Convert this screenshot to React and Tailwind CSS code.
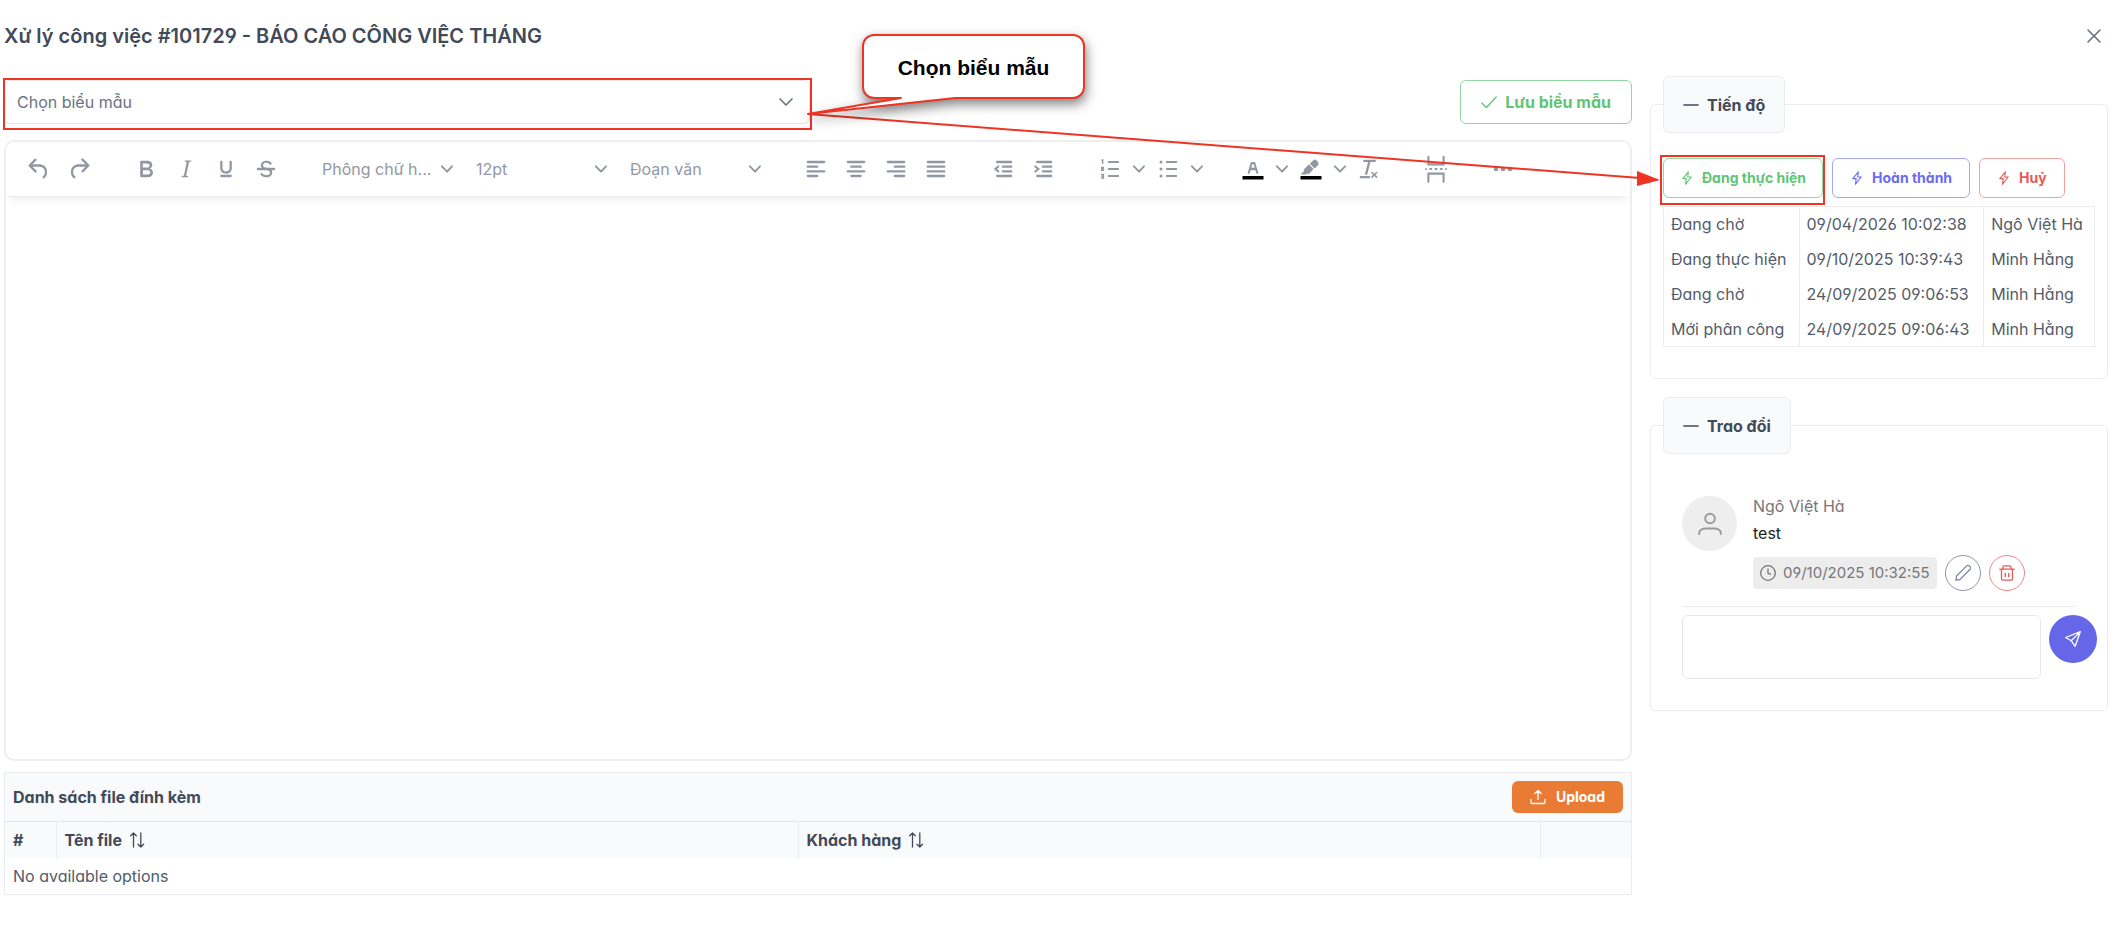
import { useState } from 'react';
import { ChevronDown, X } from 'lucide-react';

const history = [
    { status: 'Đang chờ', time: '09/04/2026 10:02:38', user: 'Ngô Việt Hà' },
    { status: 'Đang thực hiện', time: '09/10/2025 10:39:43', user: 'Minh Hằng' },
    { status: 'Đang chờ', time: '24/09/2025 09:06:53', user: 'Minh Hằng' },
    { status: 'Mới phân công', time: '24/09/2025 09:06:43', user: 'Minh Hằng' },
];

const Glyph = ({ children }) => (
    <svg viewBox="0 0 24 24" className="size-7" fill="currentColor" aria-hidden="true">
        {children}
    </svg>
);

const Lines = ({ rows }) => (
    <g stroke="currentColor" strokeWidth="2" strokeLinecap="round" fill="none">
        {rows.map(([x1, x2], i) => (
            <path key={i} d={`M${x1} ${6 + i * 4}H${x2}`} />
        ))}
    </g>
);

const icons = {
    undo: <path d="M6.4 8H12c3.7 0 6.2 2 6.8 5.1.6 2.7-.4 5.6-2.3 6.8a1 1 0 0 1-1-1.8c1.1-.6 1.8-2.7 1.4-4.6-.5-2.1-2.1-3.5-4.9-3.5H6.4l3.3 3.3a1 1 0 1 1-1.4 1.4l-5-5a1 1 0 0 1 0-1.4l5-5a1 1 0 0 1 1.4 1.4L6.4 8Z" />,
    redo: <path d="M17.6 10H12c-2.8 0-4.4 1.4-4.9 3.5-.4 2 .3 4 1.4 4.6a1 1 0 1 1-1 1.8c-2-1.2-2.9-4.1-2.3-6.8.6-3 3-5.1 6.8-5.1h5.6l-3.3-3.3a1 1 0 1 1 1.4-1.4l5 5a1 1 0 0 1 0 1.4l-5 5a1 1 0 0 1-1.4-1.4l3.3-3.3Z" />,
    bold: <path d="M7.8 19c-.3 0-.5 0-.6-.2l-.2-.5V5.7c0-.2 0-.4.2-.5l.6-.2h5c1.5 0 2.7.3 3.5 1 .7.6 1.1 1.4 1.1 2.5a3 3 0 0 1-.6 1.9c-.4.6-1 1-1.6 1.2.4.1.9.3 1.3.6s.8.7 1 1.2c.4.4.5 1 .5 1.6 0 1.3-.4 2.3-1.3 3-.8.7-2.1 1-3.8 1H7.8Zm5-8.3c.6 0 1.2-.1 1.6-.5.4-.3.6-.7.6-1.3 0-1.1-.8-1.7-2.3-1.7H9.3v3.5h3.4Zm.5 6c.7 0 1.3-.1 1.7-.4.4-.4.6-.9.6-1.5s-.2-1-.7-1.4c-.4-.3-1-.4-2-.4H9.4v3.8h4Z" />,
    italic: <path d="m16.7 4.7-.1.9h-.3c-.6 0-1 0-1.4.3-.3.3-.4.6-.5 1.1l-2.1 9.8v.6c0 .5.4.8 1.4.8h.2l-.2.8H8l.2-.8h.2c1.1 0 1.8-.5 2-1.5l2-9.8.1-.5c0-.6-.4-.8-1.4-.8h-.3l.2-.9h5.8Z" />,
    underline: <path d="M16 5c.6 0 1 .4 1 1v5.5a4 4 0 0 1-.4 1.8l-1 1.4a5.3 5.3 0 0 1-5.5 1 5 5 0 0 1-1.6-1c-.5-.4-.8-.9-1.1-1.4a4 4 0 0 1-.4-1.8V6c0-.6.4-1 1-1s1 .4 1 1v5.5c0 .3 0 .6.2 1l.6.7a3.3 3.3 0 0 0 2.2.8 3.4 3.4 0 0 0 2.2-.8c.3-.2.4-.5.6-.8l.2-.9V6c0-.6.4-1 1-1ZM8 17h8c.6 0 1 .4 1 1s-.4 1-1 1H8a1 1 0 0 1 0-2Z" />,
    strike: (
        <>
            <path d="M15.6 8.5c-.5-.7-1-1.1-1.3-1.3-.6-.4-1.3-.6-2-.6-2.7 0-2.8 1.7-2.8 2.1 0 1.6 1.8 2 3.2 2.3 4.4.9 4.6 2.8 4.6 3.9 0 1.4-.7 4.1-5 4.1A6.2 6.2 0 0 1 7 16.4l1.5-1.1c.4.6 1.6 2 3.7 2 1.6 0 2.5-.4 3-1.2.4-.8.3-2-.8-2.6-.7-.4-1.6-.7-2.9-1-1-.2-3.9-.8-3.9-3.6C7.6 6 10.3 5 12.4 5c2.9 0 4.2 1.6 4.7 2.4l-1.5 1.1Z" />
            <path d="M5 11h14a1 1 0 0 1 0 2H5a1 1 0 0 1 0-2Z" />
        </>
    ),
    left: <Lines rows={[[5, 19], [5, 13], [5, 19], [5, 13]]} />,
    center: <Lines rows={[[5, 19], [8, 16], [5, 19], [8, 16]]} />,
    right: <Lines rows={[[5, 19], [11, 19], [5, 19], [11, 19]]} />,
    justify: <Lines rows={[[5, 19], [5, 19], [5, 19], [5, 19]]} />,
    outdent: (
        <>
            <Lines rows={[[7, 19], [12, 19], [12, 19], [7, 19]]} />
            <path d="M8 9.8 5.4 12 8 14.2" fill="none" stroke="currentColor" strokeWidth="1.8" strokeLinecap="round" />
        </>
    ),
    indent: (
        <>
            <Lines rows={[[7, 19], [12, 19], [12, 19], [7, 19]]} />
            <path d="M5.4 9.8 8 12l-2.6 2.2" fill="none" stroke="currentColor" strokeWidth="1.8" strokeLinecap="round" />
        </>
    ),
    ordered: (
        <g fill="none" stroke="currentColor" strokeLinecap="round">
            <path d="M11 6h8M11 12h8M11 18h8" strokeWidth="1.8" />
            <path d="M4.8 4.5 5.8 4v3.2M4.8 10.7h1.6v1.2H4.8v1.3h1.7M4.8 16.7h1.6v3H4.8M5.1 18.2h1.3" strokeWidth="1.1" />
        </g>
    ),
    bullets: (
        <>
            <path d="M11 6h8M11 12h8M11 18h8" fill="none" stroke="currentColor" strokeWidth="1.8" strokeLinecap="round" />
            <circle cx="6" cy="6" r="1.3" />
            <circle cx="6" cy="12" r="1.3" />
            <circle cx="6" cy="18" r="1.3" />
        </>
    ),
    color: (
        <>
            <path d="M3 18h18v3H3z" fill="#000" />
            <path d="M8.7 16h-.8a.5.5 0 0 1-.5-.6l2.7-9c.1-.3.3-.4.5-.4h2.8c.2 0 .4.1.5.4l2.7 9a.5.5 0 0 1-.5.6h-.8a.5.5 0 0 1-.4-.4l-.7-2.2c0-.3-.3-.4-.5-.4h-3.4c-.2 0-.4.1-.5.4l-.7 2.2c0 .3-.2.4-.4.4Zm2.6-7.6-.6 2a.5.5 0 0 0 .5.6h1.6a.5.5 0 0 0 .5-.6l-.6-2c0-.3-.3-.4-.5-.4h-.4c-.2 0-.4.1-.5.4Z" />
        </>
    ),
    highlight: (
        <>
            <path d="M3 18h18v3H3z" fill="#000" />
            <path d="M7.7 16.7H3l3.3-3.3-.7-.8L10.2 8l4 4.1-4 4.2c-.2.2-.6.2-.8 0l-.6-.7-1.1 1.1Zm5-7.5L11 7.4l3-2.9a2 2 0 0 1 2.6 0L18 6c.7.7.7 2 0 2.7l-2.9 2.9-1.8-1.8-.6-.6Z" />
        </>
    ),
    clear: <path d="M13.2 6a1 1 0 0 1 0 .2l-2.6 10a1 1 0 0 1-1 .8h-.2a.8.8 0 0 1-.8-1l2.6-10H8a1 1 0 1 1 0-2h9a1 1 0 0 1 0 2h-3.8ZM5 18h7a1 1 0 0 1 0 2H5a1 1 0 0 1 0-2Zm13 1.5L16.5 18 15 19.5a.7.7 0 0 1-1-1l1.5-1.5-1.5-1.5a.7.7 0 0 1 1-1l1.5 1.5 1.5-1.5a.7.7 0 0 1 1 1L17.5 17l1.5 1.5a.7.7 0 0 1-1 1Z" />,
    pagebreak: (
        <g fill="none" stroke="currentColor" strokeLinecap="round">
            <path d="M5.500 1.500V8h13V1.500M5.500 23v-7h13v7" strokeWidth="1.8" />
            <path d="M3.500 12h.1M7 12h1M11.5 12h1M16 12h1M20.500 12h.1" strokeWidth="1.6" />
        </g>
    ),
    more: (
        <>
            <circle cx="6" cy="12" r="2" />
            <circle cx="12" cy="12" r="2" />
            <circle cx="18" cy="12" r="2" />
        </>
    ),
};

const Caret = () => (
    <svg viewBox="0 0 10 10" className="size-3 shrink-0" fill="currentColor" aria-hidden="true">
        <path d="M8.7 2.2c.3-.3.8-.3 1 0 .4.4.4.9 0 1.2L5.7 7.8c-.3.3-.9.3-1.2 0L.2 3.4a.8.8 0 0 1 0-1.2c.3-.3.8-.3 1.1 0L5 6l3.7-3.8Z" />
    </svg>
);

const Tool = ({ icon, label }) => (
    <button type="button" aria-label={label} className="flex h-10 w-10 items-center justify-center">
        <Glyph>{icons[icon]}</Glyph>
    </button>
);

const SplitTool = ({ icon, label }) => (
    <div className="flex">
        <Tool icon={icon} label={label} />
        <button type="button" aria-label={`${label} menu`} className="flex w-[18px] items-center justify-center">
            <Caret />
        </button>
    </div>
);

const MenuTool = ({ children }) => (
    <button type="button" className="flex h-10 w-[148px] items-center justify-between pr-2 pl-[9px] text-base">
        <span>{children}</span>
        <Caret />
    </button>
);

// 16px outline icons used on buttons
const Outline = ({ d, children }) => (
    <svg
        viewBox="0 0 16 16"
        className="size-4 shrink-0"
        fill="none"
        stroke="currentColor"
        strokeWidth="1.3"
        strokeLinecap="round"
        strokeLinejoin="round"
        aria-hidden="true"
    >
        {children}
        <path d={d} />
    </svg>
);

const Bolt = () => (
    <svg viewBox="0 0 14 14" className="size-3.5" fill="none" stroke="currentColor" strokeWidth="1.1" strokeLinejoin="round" aria-hidden="true">
        <path d="M8.4.8 2.8 7.6h3.4l-.7 5.6 5.7-7.2H7.7L8.4.8Z" />
    </svg>
);

const SortIcon = () => <Outline d="M4.500 15V1M1.700 3.800 4.500 1l2.800 2.800M11.800 1v14M9 12.200l2.800 2.800 2.800-2.800" />;

const Panel = ({ title, children }) => {
    const [open, setOpen] = useState(true);
    return (
        <fieldset className="min-w-0 rounded-md border border-[#ececee] px-3 pb-[31px]">
            <legend>
                <button
                    type="button"
                    onClick={() => setOpen(!open)}
                    className="flex h-[57px] items-center gap-2 rounded-md border border-[#ececee] bg-[#f9fafb] px-[19px] font-bold text-[#414a59]"
                >
                    <Outline d="M.8 8h14.400" />
                    {title}
                </button>
            </legend>
            {open && children}
        </fieldset>
    );
};

const Callout = () => (
    <>
        <svg className="pointer-events-none absolute top-0 left-0 h-[220px] w-[1680px] overflow-visible" fill="none" aria-hidden="true">
            <path d="M808 114 1640 178" stroke="#ee3423" strokeWidth="2" />
            <path d="m1660 180-23-9v15z" fill="#ee3423" />
            <path
                className="drop-shadow-[1px_5px_6px_rgba(0,0,0,0.5)]"
                d="M874 35h199a11 11 0 0 1 11 11v41a11 11 0 0 1-11 11H955L808 114l93-16h-27a11 11 0 0 1-11-11V46a11 11 0 0 1 11-11Z"
                fill="#fff"
                stroke="#ee3423"
                strokeWidth="2"
                strokeLinejoin="round"
            />
        </svg>
        <p className="absolute top-[36px] left-[862px] flex h-[63px] w-[223px] items-center justify-center font-['Liberation_Sans',sans-serif] text-[21px] font-bold text-black">
            Chọn biểu mẫu
        </p>
    </>
);

export default function App() {
    return (
        <div className="relative min-h-screen bg-white font-[Inter,sans-serif] text-base text-[#535c69] [font-feature-settings:'cv02','cv03','cv04','cv11']">
            <header className="flex h-[76px] items-center justify-between pr-[18px] pb-1 pl-1">
                <h1 className="text-xl font-semibold text-[#414a59]">
                    Xử lý công việc #101729 - BÁO CÁO CÔNG VIỆC THÁNG
                </h1>
                <button type="button" aria-label="Đóng" className="text-gray-500">
                    <X className="size-6" strokeWidth={1.6} />
                </button>
            </header>

            <main className="flex items-start gap-[18px] pr-4 pl-1">
                <section className="min-w-0 flex-1 pt-1">
                    {/* Form template */}
                    <div className="grid grid-cols-2 gap-4">
                        <div className="relative">
                            <select
                                aria-label="Chọn biểu mẫu"
                                className="h-11 w-full appearance-none rounded-md border border-[#e5e7eb] bg-white px-3 text-gray-500"
                            >
                                <option>Chọn biểu mẫu</option>
                            </select>
                            <ChevronDown className="pointer-events-none absolute top-2.5 right-3 size-6 text-gray-500" strokeWidth={1.7} />
                            <div className="pointer-events-none absolute -top-0.5 -right-0.5 -bottom-1.5 -left-px border-2 border-[#ee3423]" />
                        </div>
                        <button
                            type="button"
                            className="flex h-11 items-center gap-2 justify-self-end rounded-md border border-[#8fd8a0] px-5 font-bold text-[#5fc575]"
                        >
                            <Outline d="M.8 9l4.700 4.500L15.200 3" />
                            Lưu biểu mẫu
                        </button>
                    </div>

                    {/* Editor */}
                    <div className="mt-4 overflow-hidden rounded-[10px] border-2 border-[#eeeeee]">
                        <div className="relative flex h-[54px] items-center gap-[27px] bg-white pl-[13px] text-[#9298a3] shadow-[0_2px_2px_-2px_rgba(34,47,62,0.1),0_8px_8px_-4px_rgba(34,47,62,0.07)] [font-feature-settings:normal]">
                            <div className="flex">
                                <Tool icon="undo" label="Hoàn tác" />
                                <Tool icon="redo" label="Làm lại" />
                            </div>
                            <div className="flex">
                                <Tool icon="bold" label="Đậm" />
                                <Tool icon="italic" label="Nghiêng" />
                                <Tool icon="underline" label="Gạch dưới" />
                                <Tool icon="strike" label="Gạch ngang" />
                            </div>
                            <div className="flex gap-1.5">
                                <MenuTool>Phông chữ h...</MenuTool>
                                <MenuTool>12pt</MenuTool>
                                <MenuTool>Đoạn văn</MenuTool>
                            </div>
                            <div className="flex">
                                <Tool icon="left" label="Căn trái" />
                                <Tool icon="center" label="Căn giữa" />
                                <Tool icon="right" label="Căn phải" />
                                <Tool icon="justify" label="Căn đều" />
                            </div>
                            <div className="flex">
                                <Tool icon="outdent" label="Giảm thụt lề" />
                                <Tool icon="indent" label="Tăng thụt lề" />
                            </div>
                            <div className="flex">
                                <SplitTool icon="ordered" label="Danh sách số" />
                                <SplitTool icon="bullets" label="Danh sách" />
                            </div>
                            <div className="flex">
                                <SplitTool icon="color" label="Màu chữ" />
                                <SplitTool icon="highlight" label="Màu nền" />
                                <Tool icon="clear" label="Xóa định dạng" />
                            </div>
                            <Tool icon="pagebreak" label="Ngắt trang" />
                            <Tool icon="more" label="Thêm" />
                        </div>
                        <textarea aria-label="Nội dung" className="block h-[563px] w-full resize-none p-4 outline-none" />
                    </div>

                    {/* Attachments */}
                    <div className="mt-[11px] border border-[#ebebed]">
                        <div className="flex h-12 items-center justify-between bg-[#f9fafb] px-2">
                            <h2 className="font-bold text-[#414a59]">Danh sách file đính kèm</h2>
                            <button
                                type="button"
                                className="flex h-8 items-center gap-2.5 rounded-md bg-[#ea7b34] px-[18px] text-sm font-bold text-white"
                            >
                                <Outline d="M8 10.500V1.500M4.800 4.500 8 1.500l3.200 3M1 10.500v2.700c0 .8.5 1.300 1.300 1.300h11.400c.8 0 1.300-.5 1.300-1.300v-2.700" />
                                Upload
                            </button>
                        </div>
                        <table className="w-full table-fixed text-left">
                            <thead>
                                <tr className="h-9 border-t border-[#e3e5e8] bg-[#f9fafb] text-[#414a59]">
                                    <th className="w-[51px] border-r border-[#ebebed] px-2 font-bold">#</th>
                                    <th className="border-r border-[#ebebed] px-2 font-bold">
                                        <span className="flex items-center gap-[7px]">Tên file <SortIcon /></span>
                                    </th>
                                    <th className="border-r border-[#ebebed] px-2 font-bold">
                                        <span className="flex items-center gap-[7px]">Khách hàng <SortIcon /></span>
                                    </th>
                                    <td className="w-[91px]" />
                                </tr>
                            </thead>
                            <tbody>
                                <tr className="h-9">
                                    <td colSpan={4} className="px-2">No available options</td>
                                </tr>
                            </tbody>
                        </table>
                    </div>
                </section>

                <aside className="flex w-[458px] shrink-0 flex-col gap-[18px]">
                    <Panel title="Tiến độ">
                        <div className="flex gap-[9px] pt-[25px] text-sm font-bold">
                            <div className="relative">
                                <button type="button" className="flex h-10 items-center gap-2 rounded-md border border-[#8fd8a0] px-4 text-[#5fc575]">
                                    <Bolt /> Đang thực hiện
                                </button>
                                <div className="pointer-events-none absolute -top-[3px] -right-0.5 -bottom-[7px] -left-[3px] border-2 border-[#ee3423]" />
                            </div>
                            <button type="button" className="flex h-10 items-center gap-2 rounded-md border border-[#a5a7f3] px-[17px] text-[#6a6bee]">
                                <Bolt /> Hoàn thành
                            </button>
                            <button type="button" className="flex h-10 items-center gap-2 rounded-md border border-[#f0a09d] px-[17px] text-[#e45a55]">
                                <Bolt /> Huỷ
                            </button>
                        </div>
                        <table className="mt-2 w-full border border-[#ececee]">
                            <tbody>
                                {history.map((row) => (
                                    <tr key={row.time} className="h-[35px]">
                                        <td className="border-r border-[#ececee] px-[7px] whitespace-nowrap">{row.status}</td>
                                        <td className="border-r border-[#ececee] px-[7px] whitespace-nowrap">{row.time}</td>
                                        <td className="px-[7px] whitespace-nowrap">{row.user}</td>
                                    </tr>
                                ))}
                            </tbody>
                        </table>
                    </Panel>

                    <Panel title="Trao đổi">
                        <div className="mr-5 ml-[19px] flex gap-4 border-b border-[#ececee] pt-10 pb-[15px]">
                            <div className="mt-0.5 flex size-[55px] shrink-0 items-center justify-center rounded-full bg-[#eeeeee] text-[#9b9b9b]">
                                <svg viewBox="0 0 24 24" className="size-6" fill="none" stroke="currentColor" strokeWidth="2" strokeLinecap="round" aria-hidden="true">
                                    <circle cx="12" cy="6.5" r="4.8" />
                                    <path d="M1.2 22v-1c0-3 3.5-4.500 7-4.500h7.600c3.500 0 7 1.500 7 4.500v1" />
                                </svg>
                            </div>
                            <div>
                                <p className="leading-6 text-[#777777]">Ngô Việt Hà</p>
                                <p className="mt-[3px] leading-6 text-[#222222]">test</p>
                                <div className="mt-2.5 flex items-center gap-2">
                                    <span className="flex h-8 items-center gap-[7px] rounded-sm bg-[#ededed] px-[7px] text-[15px] text-[#777777]">
                                        <Outline d="M8 4v4.300l2.500.9">
                                            <circle cx="8" cy="8" r="7.300" />
                                        </Outline>
                                        09/10/2025 10:32:55
                                    </span>
                                    <button type="button" aria-label="Sửa" className="flex size-9 items-center justify-center rounded-full border border-[#8d95ac] text-[#8089a3]">
                                        <Outline d="M.8 15.200 1.500 11 11.700.9a1.800 1.800 0 0 1 2.600 0l.8.8a1.800 1.800 0 0 1 0 2.600L5 14.500l-4.200.7Z" />
                                    </button>
                                    <button type="button" aria-label="Xóa" className="flex size-9 items-center justify-center rounded-full border border-[#ec8582] text-[#e45a55]">
                                        <Outline d="M.8 4.200h14.400M2.500 4.200v9.600c0 .9.500 1.400 1.400 1.400h8.200c.9 0 1.400-.5 1.400-1.400V4.200M4 4.200V2c0-.8.4-1.200 1.200-1.200h5.600c.8 0 1.200.4 1.200 1.200v2.200M6.300 8.300v3.400M9.700 8.300v3.400" />
                                    </button>
                                </div>
                            </div>
                        </div>
                        <div className="mt-2 -mr-0.5 ml-[19px] flex items-start gap-2">
                            <textarea aria-label="Tin nhắn" className="h-16 min-w-0 flex-1 resize-none rounded-md border border-[#e5e7eb] p-3" />
                            <button type="button" aria-label="Gửi" className="flex size-12 items-center justify-center rounded-full bg-[#6666e9] text-white">
                                <Outline d="M15.300.7.7 6.500l5.500 3.200 3.900 5.600L15.300.7ZM15.300.7 6.200 9.700" />
                            </button>
                        </div>
                    </Panel>
                </aside>
            </main>

            <Callout />
        </div>
    );
}
